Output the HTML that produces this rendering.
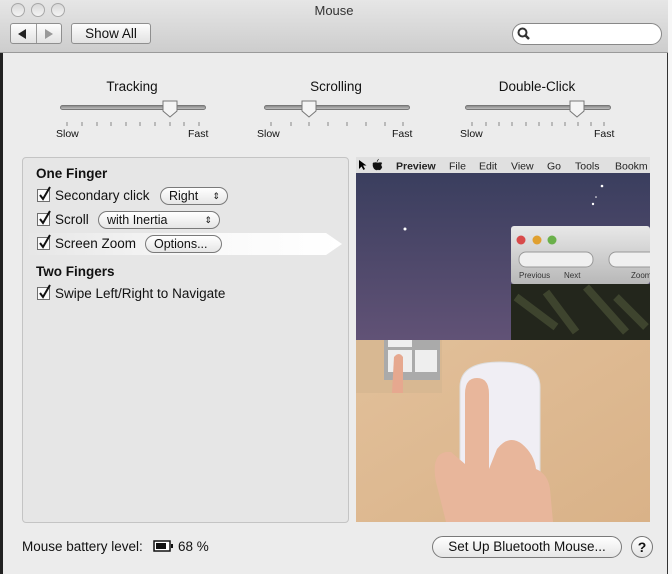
<!DOCTYPE html>
<html><head><meta charset="utf-8">
<style>
*{box-sizing:border-box;margin:0;padding:0}
body{width:672px;height:574px;overflow:hidden;background:#ececec;font-family:"Liberation Sans",sans-serif;font-size:13px;color:#111;position:relative}
.abs{position:absolute}
.tb{left:0;top:0;width:668px;height:53px;background:linear-gradient(#e6e6e6,#cdcdcd);border-bottom:1px solid #9a9a9a}
.light{width:14px;height:14px;border-radius:50%;background:linear-gradient(#d8d8d8,#f4f4f4);border:1px solid #a8a8a8;top:3px}
.btn{background:linear-gradient(#fdfdfd,#e2e2e2);border:1px solid #8f8f8f;border-radius:3px;text-align:center}
.pill{background:linear-gradient(#ffffff,#e6e6e6);border:1px solid #7a7a7a;border-radius:11px;font-size:12.5px;line-height:16px;padding-left:8px}
.track{height:5px;border-radius:3px;background:linear-gradient(#8a8a8a,#bdbdbd);border:1px solid #777}
.lbl{font-size:13.5px;text-align:center}
.sf{font-size:10.5px}
.row{font-size:13.5px}
</style></head><body>
<div class="abs" style="left:0;top:0;width:3px;height:574px;background:#222"></div>
<div class="abs" style="left:667px;top:0;width:5px;height:574px;background:#f7f7f7;border-left:1px solid #333"></div>
<div class="abs tb"></div>
<div class="abs light" style="left:11px"></div>
<div class="abs light" style="left:31px"></div>
<div class="abs light" style="left:51px"></div>
<div class="abs" style="left:0;width:668px;top:3px;text-align:center;font-size:13px;color:#333">Mouse</div>
<div class="abs btn" style="left:10px;top:23px;width:52px;height:21px"></div>
<div class="abs" style="left:36px;top:24px;width:1px;height:19px;background:#9a9a9a"></div>
<div class="abs" style="left:18px;top:29px;width:0;height:0;border-top:5px solid transparent;border-bottom:5px solid transparent;border-right:8px solid #222"></div>
<div class="abs" style="left:45px;top:29px;width:0;height:0;border-top:5px solid transparent;border-bottom:5px solid transparent;border-left:8px solid #999"></div>
<div class="abs btn" style="left:71px;top:23px;width:80px;height:21px;line-height:19px;font-size:13.5px">Show All</div>
<div class="abs" style="left:512px;top:23px;width:150px;height:22px;background:#fff;border:1px solid #888;border-radius:11px"></div>
<svg class="abs" style="left:517px;top:27px" width="14" height="14"><circle cx="5.5" cy="5.5" r="4" fill="none" stroke="#333" stroke-width="2"/><line x1="8.5" y1="8.5" x2="12" y2="12" stroke="#333" stroke-width="2.5"/></svg>

<div class="abs lbl" style="left:62px;width:140px;top:79px">Tracking</div>
<div class="abs lbl" style="left:266px;width:140px;top:79px">Scrolling</div>
<div class="abs lbl" style="left:467px;width:140px;top:79px">Double-Click</div>
<div class="abs track" style="left:60px;top:105px;width:146px"></div>
<div class="abs track" style="left:264px;top:105px;width:146px"></div>
<div class="abs track" style="left:465px;top:105px;width:146px"></div>
<svg class="abs" style="left:0;top:98px" width="668" height="34">
<g fill="#f4f4f4" stroke="#777" stroke-width="1">
<path d="M163 3h14v10l-7 6l-7-6z"/><path d="M302 3h14v10l-7 6l-7-6z"/><path d="M570 3h14v10l-7 6l-7-6z"/></g>
<g stroke="#888" stroke-width="1">
<path d="M67 24v4M82 24v4M97 24v4M111 24v4M126 24v4M140 24v4M155 24v4M170 24v4M184 24v4M199 24v4"/>
<path d="M271 24v4M291 24v4M309 24v4M328 24v4M347 24v4M366 24v4M385 24v4M403 24v4"/>
<path d="M472 24v4M486 24v4M499 24v4M512 24v4M526 24v4M539 24v4M552 24v4M565 24v4M578 24v4M591 24v4M604 24v4"/>
</g></svg>
<div class="abs sf" style="left:56px;top:128px">Slow</div>
<div class="abs sf" style="left:188px;top:128px">Fast</div>
<div class="abs sf" style="left:257px;top:128px">Slow</div>
<div class="abs sf" style="left:392px;top:128px">Fast</div>
<div class="abs sf" style="left:460px;top:128px">Slow</div>
<div class="abs sf" style="left:594px;top:128px">Fast</div>

<div class="abs" style="left:22px;top:157px;width:327px;height:366px;background:#e6e6e6;border:1px solid #c4c4c4;border-radius:4px"></div>
<div class="abs" style="left:23px;top:233px;width:319px;height:22px;background:linear-gradient(90deg,#e6e6e6,#fafafa 60%,#fff);clip-path:polygon(0 0,95% 0,100% 50%,95% 100%,0 100%)"></div>
<div class="abs row" style="left:36px;top:166px;font-weight:bold">One Finger</div>
<div class="abs row" style="left:36px;top:264px;font-weight:bold">Two Fingers</div>
<svg class="abs" style="left:36px;top:186px" width="16" height="120">
<g><rect x="1.5" y="3.5" width="12" height="12" fill="#fafafa" stroke="#6e6e6e"/><path d="M4 9l3 4l7-12" fill="none" stroke="#111" stroke-width="2"/></g>
<g transform="translate(0,24)"><rect x="1.5" y="3.5" width="12" height="12" fill="#fafafa" stroke="#6e6e6e"/><path d="M4 9l3 4l7-12" fill="none" stroke="#111" stroke-width="2"/></g>
<g transform="translate(0,48)"><rect x="1.5" y="3.5" width="12" height="12" fill="#fafafa" stroke="#6e6e6e"/><path d="M4 9l3 4l7-12" fill="none" stroke="#111" stroke-width="2"/></g>
<g transform="translate(0,98)"><rect x="1.5" y="3.5" width="12" height="12" fill="#fafafa" stroke="#6e6e6e"/><path d="M4 9l3 4l7-12" fill="none" stroke="#111" stroke-width="2"/></g>
</svg>
<div class="abs row" style="left:55px;top:188px">Secondary click</div>
<div class="abs row" style="left:55px;top:212px">Scroll</div>
<div class="abs row" style="left:55px;top:236px">Screen Zoom</div>
<div class="abs row" style="left:55px;top:286px">Swipe Left/Right to Navigate</div>
<div class="abs pill" style="left:160px;top:187px;width:68px;height:18px">Right<span style="position:absolute;right:7px;top:0;font-size:9px">&#8661;</span></div>
<div class="abs pill" style="left:98px;top:211px;width:122px;height:18px">with Inertia<span style="position:absolute;right:7px;top:0;font-size:9px">&#8661;</span></div>
<div class="abs pill" style="left:145px;top:235px;width:77px;height:18px">Options...</div>

<svg class="abs" style="left:356px;top:157px" width="294" height="365">
<defs>
<linearGradient id="sky" x1="0" y1="0" x2="0" y2="1"><stop offset="0" stop-color="#3a3e5e"/><stop offset="1" stop-color="#615276"/></linearGradient>
<linearGradient id="wood" x1="0" y1="0" x2="1" y2="1"><stop offset="0" stop-color="#e2c09a"/><stop offset="1" stop-color="#d9b288"/></linearGradient>
<linearGradient id="tbar" x1="0" y1="0" x2="0" y2="1"><stop offset="0" stop-color="#e8e8e8"/><stop offset="1" stop-color="#b8b8b8"/></linearGradient>
</defs>
<rect width="294" height="16" fill="#e0e0e0"/>
<rect y="16" width="294" height="167" fill="url(#sky)"/>
<g fill="#fff"><circle cx="49" cy="72" r="1.5"/><circle cx="246" cy="29" r="1.3"/><circle cx="237" cy="47" r="1.2"/><circle cx="240" cy="40" r="0.8"/></g>
<path d="M17 6q3-1 5 0q2-1 4 0q-2 2 0 4q-1 3-3 3q-1-1-2 0q-3 0-4-4q0-3 0-3zM21 5q0-2 2-3" fill="#111" stroke="#111" stroke-width="0.5"/>
<path d="M3 3v9l2.5-2.5l2 3.5l1.5-1l-2-3.5h3.5z" fill="#000"/>
<text x="40" y="12.5" font-size="10.5" font-family="Liberation Sans" font-weight="bold" fill="#222">Preview</text>
<text x="93" y="12.5" font-size="10.5" font-family="Liberation Sans" fill="#222">File</text>
<text x="123" y="12.5" font-size="10.5" font-family="Liberation Sans" fill="#222">Edit</text>
<text x="155" y="12.5" font-size="10.5" font-family="Liberation Sans" fill="#222">View</text>
<text x="191" y="12.5" font-size="10.5" font-family="Liberation Sans" fill="#222">Go</text>
<text x="219" y="12.5" font-size="10.5" font-family="Liberation Sans" fill="#222">Tools</text>
<text x="259" y="12.5" font-size="10.5" font-family="Liberation Sans" fill="#222">Bookm</text>
<rect x="155" y="69" width="139" height="58" rx="3" fill="url(#tbar)"/>
<circle cx="165" cy="83" r="4.5" fill="#d84a4a"/><circle cx="181" cy="83" r="4.5" fill="#e0a030"/><circle cx="196" cy="83" r="4.5" fill="#6ab04a"/>
<rect x="163" y="95" width="74" height="15" rx="7" fill="#f0f0f0" stroke="#999"/>
<rect x="253" y="95" width="50" height="15" rx="7" fill="#f0f0f0" stroke="#999"/>
<text x="163" y="121" font-size="8" font-family="Liberation Sans" fill="#333">Previous</text>
<text x="208" y="121" font-size="8" font-family="Liberation Sans" fill="#333">Next</text>
<text x="275" y="121" font-size="8" font-family="Liberation Sans" fill="#333">Zoom</text>
<rect x="155" y="127" width="139" height="56" fill="#23261c"/>
<path d="M160 140l40 30M190 135l30 40M230 130l40 45M260 140l30 30" stroke="#4a5236" stroke-width="8" opacity=".7"/>
<rect y="183" width="294" height="182" fill="url(#wood)"/>
<rect x="0" y="183" width="86" height="53" fill="#d8b892"/>
<rect x="28" y="183" width="56" height="40" fill="#aaa"/>
<rect x="32" y="183" width="24" height="7" fill="#eee"/><rect x="32" y="193" width="24" height="22" fill="#eee"/><rect x="59" y="193" width="22" height="22" fill="#eee"/>
<path d="M38 200q5-6 9 0v36h-11z" fill="#e6a88f"/>
<path d="M104 230q0-25 40-25q40 0 40 25v100q0 18-40 18q-40 0-40-18z" fill="#f0eef4" stroke="#ddd"/>
<path d="M90 365l-10-40q-6-32 15-30l14 12v-70q0-16 12-16q12 0 12 16v75l8-20q12-15 25-5q12 10 14 25q12 5 14 20l3 33z" fill="#e8b69b"/>
</svg>

<div class="abs" style="left:22px;top:539px;font-size:13.5px">Mouse battery level:</div>
<svg class="abs" style="left:153px;top:540px" width="22" height="13"><rect x="1" y="1" width="16" height="10" fill="#fff" stroke="#111" stroke-width="1.5"/><rect x="3" y="3" width="10" height="6" fill="#111"/><rect x="18" y="4" width="2" height="4" fill="#111"/></svg>
<div class="abs" style="left:178px;top:539px;font-size:13.5px">68 %</div>
<div class="abs pill" style="left:432px;top:536px;width:190px;height:22px;line-height:20px;padding-left:0;text-align:center;font-size:13.5px">Set Up Bluetooth Mouse...</div>
<div class="abs" style="left:631px;top:536px;width:22px;height:22px;border-radius:50%;border:1px solid #777;background:linear-gradient(#fff,#e4e4e4);text-align:center;line-height:20px;font-weight:bold;font-size:14px">?</div>
</body></html>
